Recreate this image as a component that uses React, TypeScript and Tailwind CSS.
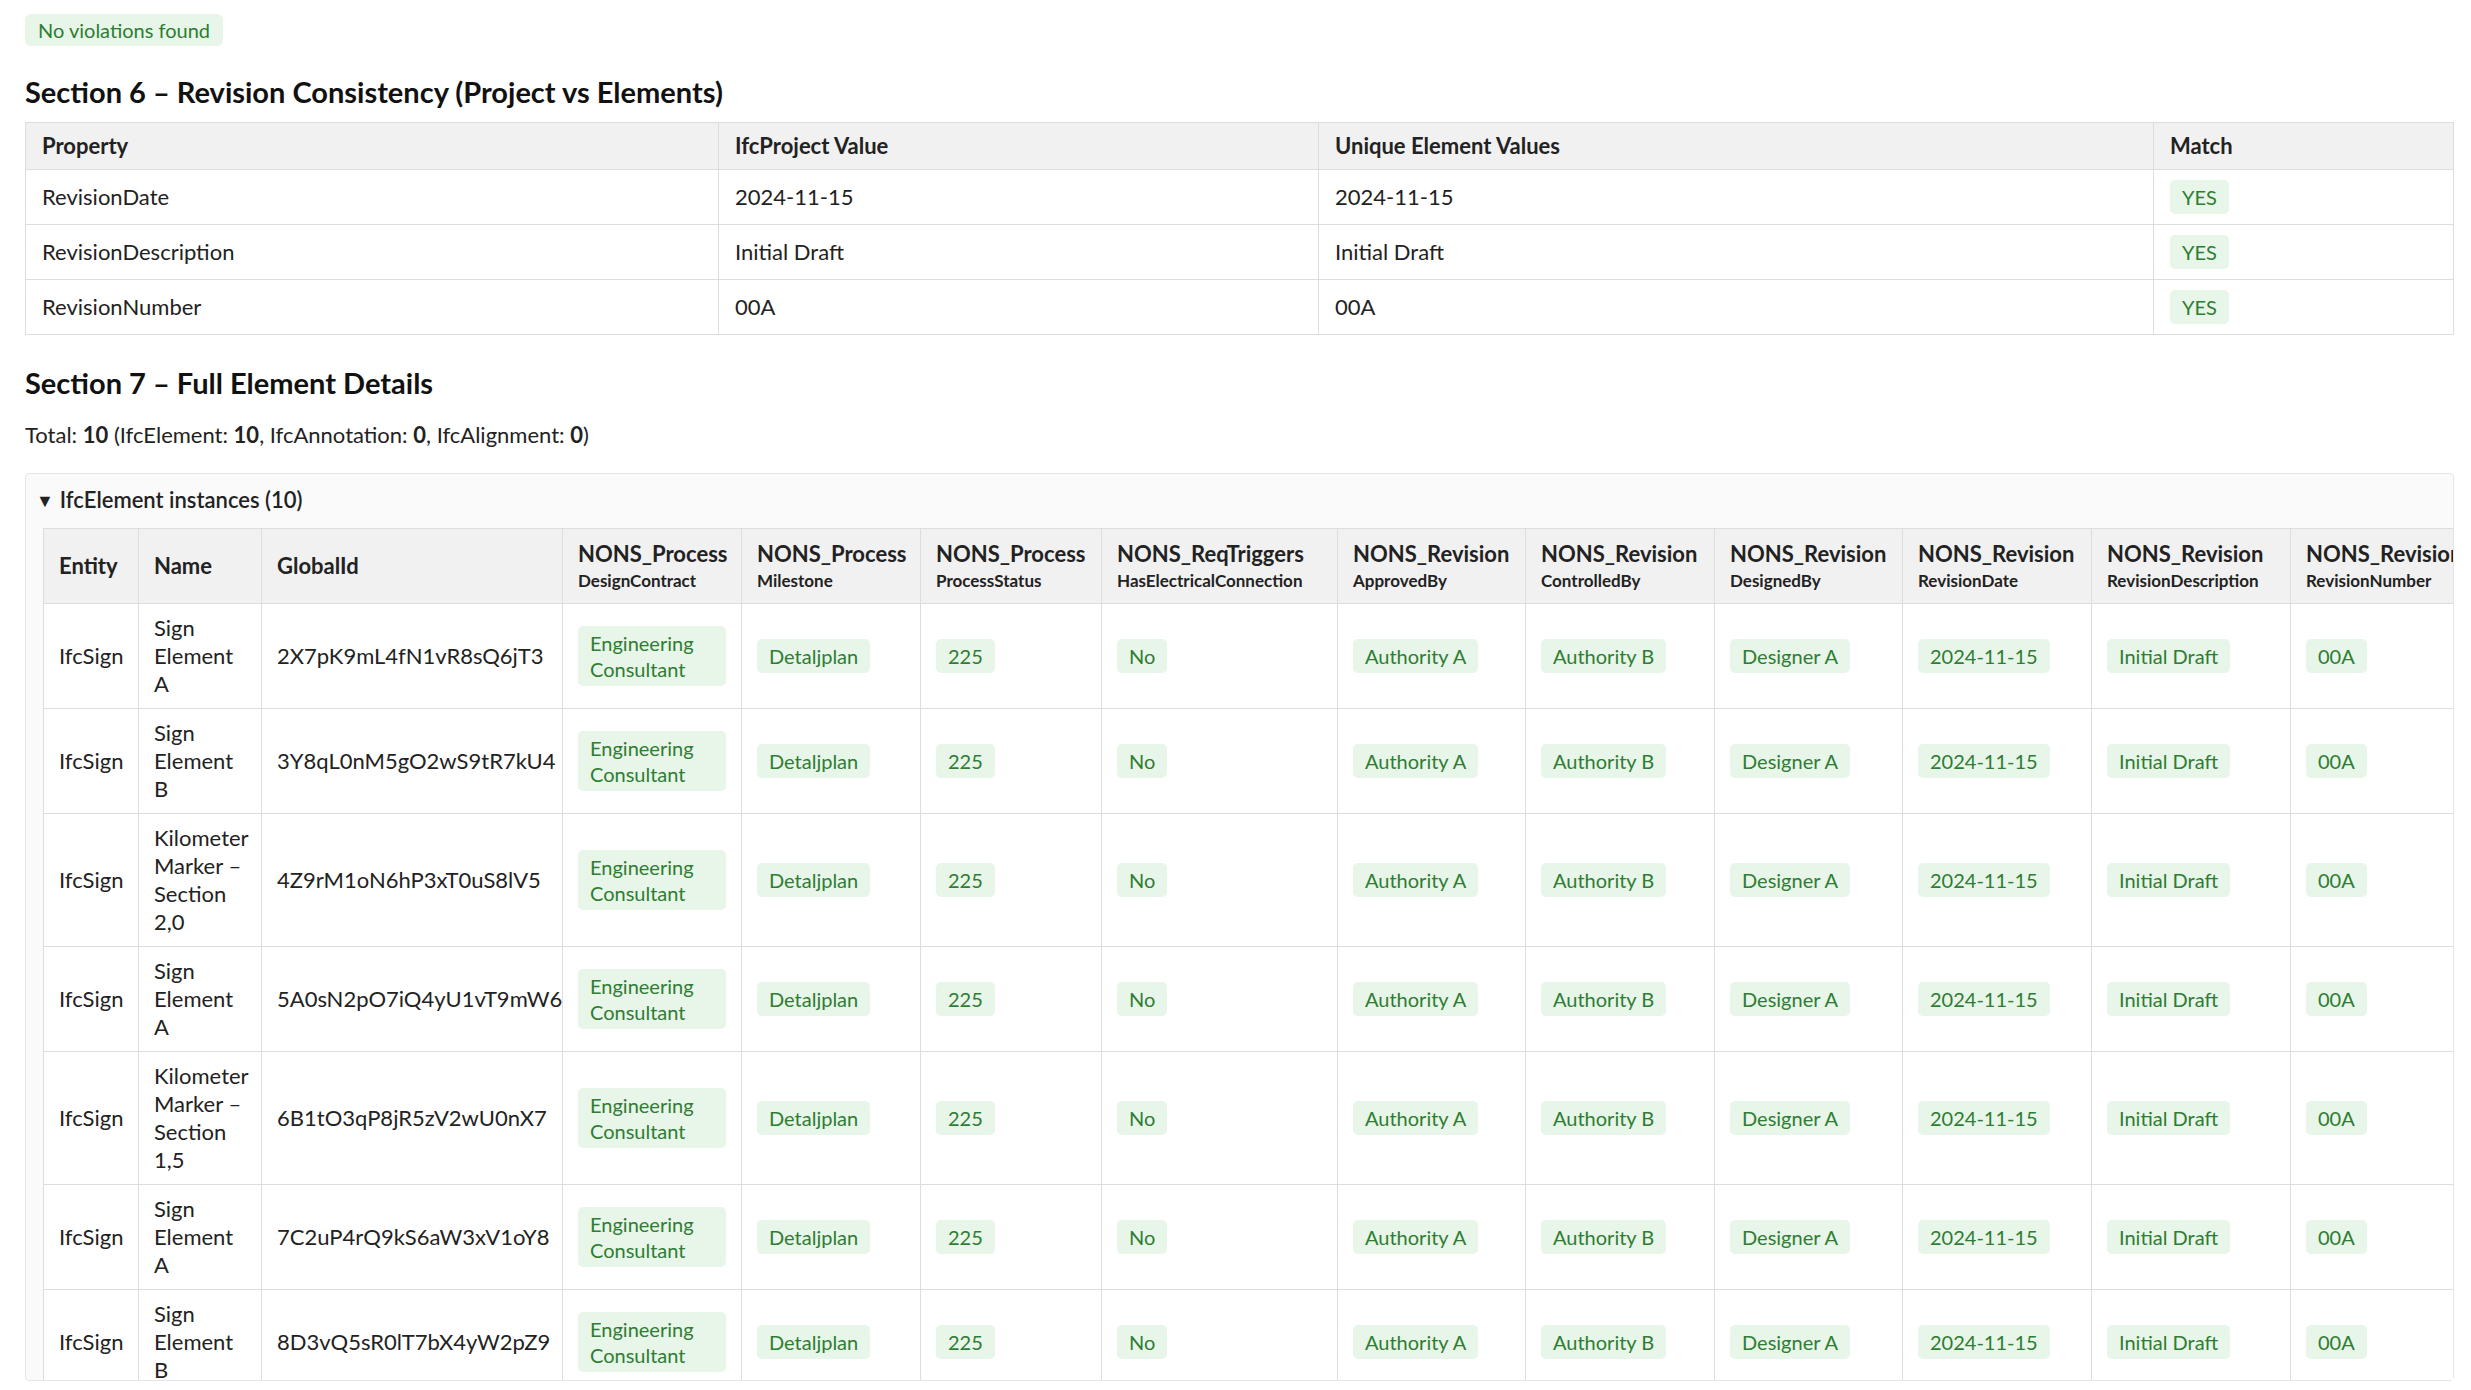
const F = { fontFamily: 'Lato, "Noto Sans", sans-serif' };

const revRows = [
  ['RevisionDate', '2024-11-15', '2024-11-15'],
  ['RevisionDescription', 'Initial Draft', 'Initial Draft'],
  ['RevisionNumber', '00A', '00A'],
];

const cols: { top: string; sub: string; w: number }[] = [
  { top: 'NONS_Process', sub: 'DesignContract', w: 179 },
  { top: 'NONS_Process', sub: 'Milestone', w: 179 },
  { top: 'NONS_Process', sub: 'ProcessStatus', w: 181 },
  { top: 'NONS_ReqTriggers', sub: 'HasElectricalConnection', w: 236 },
  { top: 'NONS_Revision', sub: 'ApprovedBy', w: 188 },
  { top: 'NONS_Revision', sub: 'ControlledBy', w: 189 },
  { top: 'NONS_Revision', sub: 'DesignedBy', w: 188 },
  { top: 'NONS_Revision', sub: 'RevisionDate', w: 189 },
  { top: 'NONS_Revision', sub: 'RevisionDescription', w: 199 },
  { top: 'NONS_Revision', sub: 'RevisionNumber', w: 200 },
];

const values = ['Engineering Consultant', 'Detaljplan', '225', 'No', 'Authority A', 'Authority B', 'Designer A', '2024-11-15', 'Initial Draft', '00A'];

const elements = [
  ['Sign Element A', '2X7pK9mL4fN1vR8sQ6jT3'],
  ['Sign Element B', '3Y8qL0nM5gO2wS9tR7kU4'],
  ['Kilometer Marker – Section 2,0', '4Z9rM1oN6hP3xT0uS8lV5'],
  ['Sign Element A', '5A0sN2pO7iQ4yU1vT9mW6'],
  ['Kilometer Marker – Section 1,5', '6B1tO3qP8jR5zV2wU0nX7'],
  ['Sign Element A', '7C2uP4rQ9kS6aW3xV1oY8'],
  ['Sign Element B', '8D3vQ5sR0lT7bX4yW2pZ9'],
  ['Sign Element B', '9E4wR6tS1mU8cY5zX3qA0'],
  ['Kilometer Marker – Section 0,5', '0F5xS7uT2nV9dZ6aY4rB1'],
  ['Sign Element A', '1G6yT8vU3oW0eA7bZ5sC2'],
];

const tableW = 95 + 123 + 301 + cols.reduce((s, c) => s + c.w, 0);

function Pill({ children }: { children: React.ReactNode }) {
  return (
    <span className="inline-block rounded-[5px] bg-[#e8f5e9] px-[12px] py-[4px] text-[20px] leading-[26px] text-[#2e7d32]">
      {children}
    </span>
  );
}

export default function App() {
  return (
    <div className="min-h-screen bg-white pl-[25px] pr-[17px] pt-[14px] text-[22px] leading-[28px] text-[#222]" style={F}>
      <span className="inline-block rounded-[6px] bg-[#e8f5e9] px-[13px] py-[3px] text-[20px] leading-[26px] text-[#2e7d32]">
        No violations found
      </span>

      <h2 className="mt-[28px] mb-[12px] text-[29px] font-bold leading-[36px] text-[#111]">
        Section 6 – Revision Consistency (Project vs Elements)
      </h2>
      <table className="w-full table-fixed border-collapse border border-[#ddd]">
        <colgroup>
          <col className="w-[693px]" />
          <col className="w-[600px]" />
          <col className="w-[835px]" />
          <col />
        </colgroup>
        <thead>
          <tr className="bg-[#f1f1f1]">
            {['Property', 'IfcProject Value', 'Unique Element Values', 'Match'].map(h => (
              <th key={h} className="border border-[#ddd] px-[16px] py-[9px] text-left font-bold">{h}</th>
            ))}
          </tr>
        </thead>
        <tbody>
          {revRows.map(r => (
            <tr key={r[0]}>
              <td className="border border-[#ddd] px-[16px] py-[12px]">{r[0]}</td>
              <td className="border border-[#ddd] px-[16px] py-[12px]">{r[1]}</td>
              <td className="border border-[#ddd] px-[16px] py-[12px]">{r[2]}</td>
              <td className="border border-[#ddd] px-[16px] py-[10px]"><Pill>YES</Pill></td>
            </tr>
          ))}
        </tbody>
      </table>

      <h2 className="mt-[30px] text-[29px] font-bold leading-[36px] text-[#111]">Section 7 – Full Element Details</h2>
      <p className="mt-[20px]">
        Total: <b>10</b> (IfcElement: <b>10</b>, IfcAnnotation: <b>0</b>, IfcAlignment: <b>0</b>)
      </p>

      <div className="mt-[24px] rounded-[4px] border border-[#e5e5e5] bg-[#fafafa]">
        <div className="flex items-center gap-[6px] px-[10px] py-[12px] font-semibold">
          <span className="text-[18px]">▼</span>
          <span>IfcElement instances (10)</span>
        </div>
        <div className="ml-[17px] mt-[2px] h-[852px] overflow-auto bg-white">
          <table className="table-fixed border-collapse" style={{ width: tableW }}>
            <colgroup>
              <col className="w-[95px]" />
              <col className="w-[123px]" />
              <col className="w-[301px]" />
              {cols.map((c, i) => <col key={i} style={{ width: c.w }} />)}
            </colgroup>
            <thead>
              <tr className="bg-[#f1f1f1]">
                {['Entity', 'Name', 'GlobalId'].map(h => (
                  <th key={h} className="border border-[#ddd] px-[15px] py-[12px] text-left align-middle font-bold">{h}</th>
                ))}
                {cols.map((c, i) => (
                  <th key={i} className="overflow-hidden whitespace-nowrap border border-[#ddd] px-[15px] py-[10px] text-left font-bold">
                    <div className="leading-[30px]">{c.top}</div>
                    <div className="text-[17px] leading-[24px]">{c.sub}</div>
                  </th>
                ))}
              </tr>
            </thead>
            <tbody>
              {elements.map((e, r) => (
                <tr key={r}>
                  <td className="border border-[#ddd] px-[15px] py-[10px]">IfcSign</td>
                  <td className="border border-[#ddd] px-[15px] py-[10px]">{e[0]}</td>
                  <td className="border border-[#ddd] px-[15px] py-[10px]">{e[1]}</td>
                  {values.map((v, i) => (
                    <td key={i} className="border border-[#ddd] px-[15px] py-[10px]">
                      <Pill>{v}</Pill>
                    </td>
                  ))}
                </tr>
              ))}
            </tbody>
          </table>
        </div>
      </div>
    </div>
  );
}
